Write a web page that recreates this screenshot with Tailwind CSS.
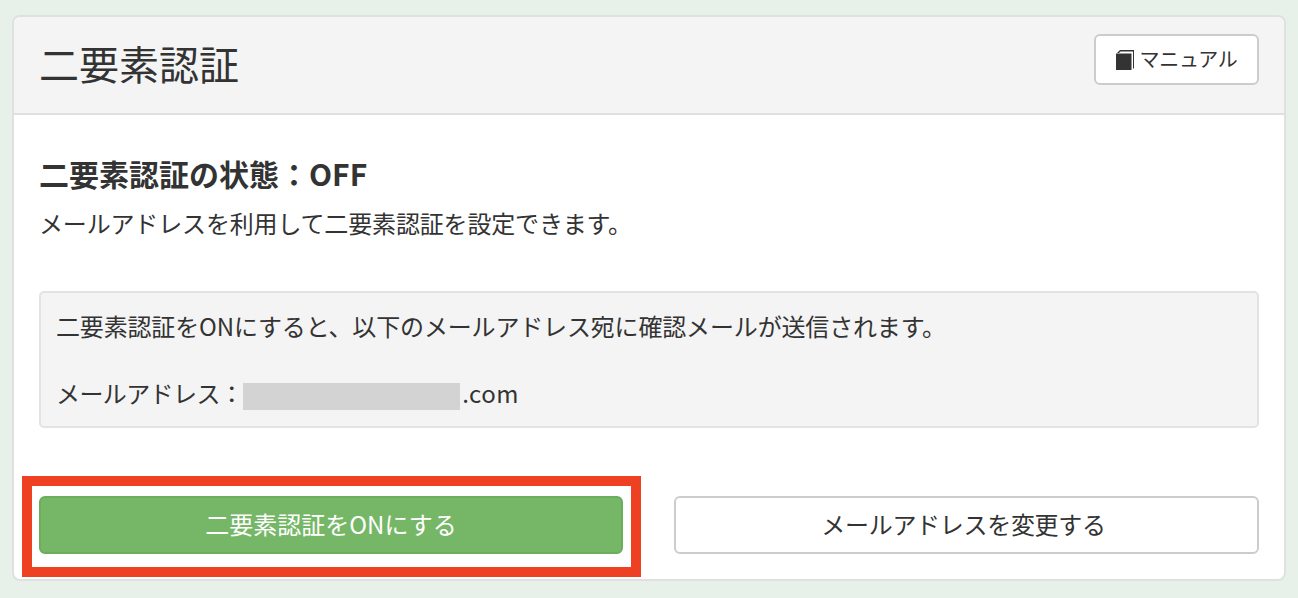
<!DOCTYPE html>
<html lang="ja">
<head>
<meta charset="utf-8">
<script src="https://cdn.jsdelivr.net/npm/@tailwindcss/browser@4"></script>
</head>
<body class="w-[1298px] h-[598px] overflow-hidden bg-[#e7f1ea] text-[#333333] font-['Noto_Sans_CJK_JP','Noto_Sans',sans-serif]">
<div class="pt-[15px] pl-[12px] pr-[12px]">
  <section class="relative w-[1274px] h-[566px] bg-white border-2 border-[#e0e0e0] rounded-[8px] flex flex-col overflow-hidden">
    <header class="h-[98px] bg-[#f4f4f4] border-b-2 border-[#e0e0e0] flex items-start justify-between pl-[25px] pr-[25px] pt-[17px] shrink-0">
      <h1 class="text-[40px] leading-[60px] font-normal -mt-[1px]">二要素認証</h1>
      <a class="w-[165px] h-[51px] bg-white border-2 border-[#cccccc] rounded-[6px] flex items-center justify-center gap-[5px] text-[20px] tracking-[-0.3px]">
        <svg class="w-[20px] h-[22px] -ml-[1px]" viewBox="0 0 20 22"><path d="M2 4 L5 1 H19 V19 L18 20 V2.5 H5.5 L4 4 Z" fill="#333"/><path d="M1 4.5 H16.5 V21 H1 Z" fill="#333"/></svg>
        <span class="pb-[2px]">マニュアル</span>
      </a>
    </header>
    <div class="flex-1 pt-[40px] px-[25px] flex flex-col">
      <h2 class="text-[30px] leading-[36px] font-bold">二要素認証の状態：OFF</h2>
      <p class="mt-[14px] text-[24px] leading-[36px] tracking-[-0.16px]">メールアドレスを利用して二要素認証を設定できます。</p>
      <div class="mt-[50px] h-[137px] w-[1220px] bg-[#f4f4f4] border-2 border-[#e3e3e3] rounded-[5px] px-[15px] pt-[15px] text-[24px] leading-[36px]">
        <p class="tracking-[-0.16px]">二要素認証をONにすると、以下のメールアドレス宛に確認メールが送信されます。</p>
        <p class="mt-[31px] flex items-center"><span class="tracking-[-0.6px]">メールアドレス：</span><span class="inline-block w-[217px] h-[27px] mt-[6px] bg-[#d3d3d3]"></span><span class="ml-[2px] tracking-[0.5px]">.com</span></p>
      </div>
      <div class="mt-[68px] flex justify-between">
        <button class="w-[584px] h-[58px] rounded-[6px] bg-[#76b767] border-2 border-[#6aae5b] text-white text-[24px] pb-[3px]">二要素認証をONにする</button>
        <button class="w-[585px] h-[58px] rounded-[6px] bg-white border-2 border-[#cccccc] text-[24px] tracking-[-0.3px] pb-[3px] pr-[6px]">メールアドレスを変更する</button>
      </div>
    </div>
    <div class="absolute left-[8px] top-[459px] w-[619px] h-[101px] border-[10px] border-[#ee4023]"></div>
  </section>
</div>
</body>
</html>
